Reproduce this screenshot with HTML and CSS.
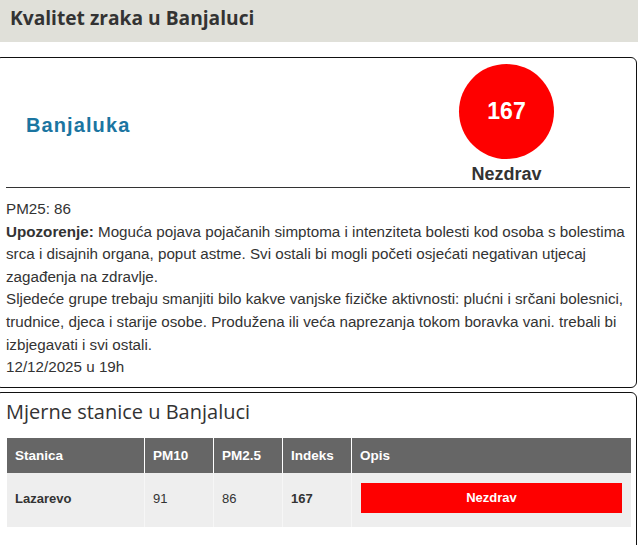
FILE: index.html
```html
<!DOCTYPE html>
<html lang="bs">
<head>
    <meta charset="UTF-8">
    <meta name="viewport" content="width=device-width, initial-scale=1.0">
    <title>Kvalitet zraka u Banjaluci</title>
    <link rel="stylesheet" href="styles.css">
</head>
<body>
    <header class="page-header">
        <h1>Kvalitet zraka u Banjaluci</h1>
    </header>

    <section class="card summary">
        <div class="summary-top">
            <h2 class="city">Banjaluka</h2>
            <div class="aqi">
                <div class="aqi-circle">167</div>
                <div class="aqi-label">Nezdrav</div>
            </div>
        </div>
        <div class="details">
            <div>PM25: 86</div>
            <div><strong>Upozorenje:</strong> Moguća pojava pojačanih simptoma i intenziteta bolesti kod osoba s bolestima srca i disajnih organa, poput astme. Svi ostali bi mogli početi osjećati negativan utjecaj zagađenja na zdravlje.</div>
            <div>Sljedeće grupe trebaju smanjiti bilo kakve vanjske fizičke aktivnosti: plućni i srčani bolesnici, trudnice, djeca i starije osobe. Produžena ili veća naprezanja tokom boravka vani. trebali bi izbjegavati i svi ostali.</div>
            <div>12/12/2025 u 19h</div>
        </div>
    </section>

    <section class="card stations">
        <h2 class="stations-title">Mjerne stanice u Banjaluci</h2>
        <table class="stations-table">
            <thead>
                <tr>
                    <th class="col-name">Stanica</th>
                    <th class="col-num">PM10</th>
                    <th class="col-num">PM2.5</th>
                    <th class="col-num">Indeks</th>
                    <th>Opis</th>
                </tr>
            </thead>
            <tbody>
                <tr>
                    <td class="station-name">Lazarevo</td>
                    <td>91</td>
                    <td>86</td>
                    <td class="index">167</td>
                    <td class="status-cell"><div class="status">Nezdrav</div></td>
                </tr>
            </tbody>
        </table>
    </section>
</body>
</html>
```

FILE: styles.css
```css
body {
    margin: 0;
    padding: 0;
    font-family: "Liberation Sans", Arial, sans-serif;
    color: #333;
    background: #fff;
    overflow: hidden;
}

.page-header {
    background: #e0e0d9;
    height: 42px;
    padding: 0 10px;
    margin-bottom: 15px;
}

.page-header h1 {
    margin: 0;
    font-family: "Open Sans", sans-serif;
    font-size: 19.2px;
    font-weight: 700;
    line-height: 35px;
    color: #333;
}

.card {
    border: 1px solid #111;
    border-radius: 6px;
    margin: 0 1px 0 -5px;
    padding: 0 6px 0 10px;
}

.summary {
    height: 329px;
    margin-bottom: 4px;
}

.summary-top {
    display: flex;
    justify-content: space-between;
    align-items: center;
    padding: 6px 76px 0 20px;
    border-bottom: 1px solid #333;
}

.city {
    margin: 0;
    font-size: 20px;
    font-weight: 700;
    letter-spacing: 1.1px;
    color: #1b75a1;
}

.aqi {
    display: flex;
    flex-direction: column;
    align-items: center;
}

.aqi-circle {
    width: 95px;
    height: 95px;
    border-radius: 50%;
    background: #fe0000;
    color: #fff;
    font-size: 23px;
    font-weight: 700;
    display: flex;
    align-items: center;
    justify-content: center;
}

.aqi-label {
    font-size: 18px;
    font-weight: 700;
    line-height: 26px;
    padding-top: 2px;
    color: #333;
}

.details {
    padding-top: 10px;
    font-size: 15.2px;
    line-height: 22.6px;
}

.stations {
    height: 200px;
}

.stations-title {
    margin: 0;
    padding: 6px 0 13px;
    font-family: "Open Sans", sans-serif;
    font-size: 20px;
    font-weight: 400;
    line-height: 26px;
    color: #333;
}

.stations-table {
    width: 624px;
    margin-left: 1px;
    border-collapse: collapse;
    font-size: 13px;
}

.stations-table th {
    background: #666;
    color: #fff;
    font-size: 13.5px;
    font-weight: 700;
    text-align: left;
    height: 35px;
    padding: 0 8px;
    border-left: 1px solid #fff;
}

.stations-table th:first-child,
.stations-table td:first-child {
    border-left: none;
}

.stations-table td {
    background: #eee;
    height: 30px;
    padding: 10px 8px 14px;
    border-left: 1px solid #f6f6f6;
}

.stations-table .status-cell {
    padding: 10px 9px 14px;
}

.col-name {
    width: 121px;
}

.col-num {
    width: 52px;
}

.station-name,
.index {
    font-weight: 700;
}

.status {
    background: #fe0000;
    color: #fff;
    font-weight: 700;
    text-align: center;
    height: 30px;
    line-height: 30px;
}
```
